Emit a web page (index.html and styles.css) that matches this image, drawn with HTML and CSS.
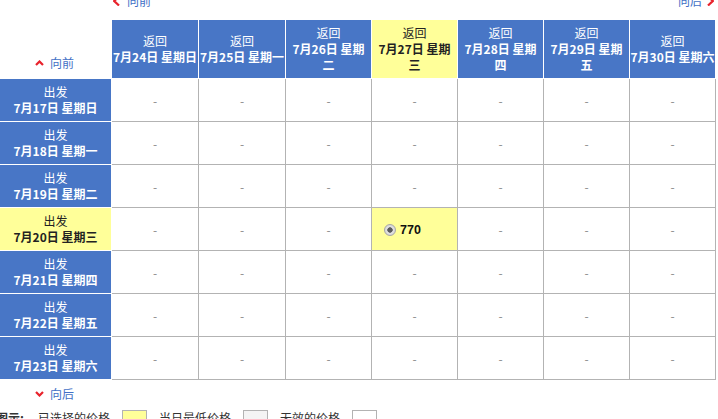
FILE: index.html
```html
<!DOCTYPE html>
<html lang="zh-CN">
<head>
<meta charset="utf-8">
<title>往返日期价格表</title>
<link rel="stylesheet" href="styles.css">
</head>
<body>
<div class="page">
  <div class="topnav">
    <a class="nav prev" href="#"><svg class="chev-lr" width="7" height="10" viewBox="0 0 7 10"><polyline points="6,0.5 1.2,5 6,9.5"/></svg>向前</a>
    <a class="nav next" href="#">向后<svg class="chev-lr" width="7" height="10" viewBox="0 0 7 10"><polyline points="1,0.5 5.8,5 1,9.5"/></svg></a>
  </div>

  <div class="grid">
    <div class="corner"><a class="nav up" href="#"><svg class="caret" width="9" height="6" viewBox="0 0 9 6"><polyline points="1,5 4.5,1.5 8,5"/></svg>向前</a></div>
    <div class="hd"><span>返回</span><b>7月24日 星期日</b></div>
    <div class="hd"><span>返回</span><b>7月25日 星期一</b></div>
    <div class="hd"><span>返回</span><b>7月26日 星期<br>二</b></div>
    <div class="hd hl"><span>返回</span><b>7月27日 星期<br>三</b></div>
    <div class="hd"><span>返回</span><b>7月28日 星期<br>四</b></div>
    <div class="hd"><span>返回</span><b>7月29日 星期<br>五</b></div>
    <div class="hd"><span>返回</span><b>7月30日 星期六</b></div>

    <div class="rh"><span>出发</span><b>7月17日 星期日</b></div>
    <div class="cell">-</div><div class="cell">-</div><div class="cell">-</div><div class="cell">-</div><div class="cell">-</div><div class="cell">-</div><div class="cell">-</div>

    <div class="rh"><span>出发</span><b>7月18日 星期一</b></div>
    <div class="cell">-</div><div class="cell">-</div><div class="cell">-</div><div class="cell">-</div><div class="cell">-</div><div class="cell">-</div><div class="cell">-</div>

    <div class="rh"><span>出发</span><b>7月19日 星期二</b></div>
    <div class="cell">-</div><div class="cell">-</div><div class="cell">-</div><div class="cell">-</div><div class="cell">-</div><div class="cell">-</div><div class="cell">-</div>

    <div class="rh hl"><span>出发</span><b>7月20日 星期三</b></div>
    <div class="cell">-</div><div class="cell">-</div><div class="cell">-</div>
    <div class="cell price selected"><span class="radio"></span><b>770</b></div>
    <div class="cell">-</div><div class="cell">-</div><div class="cell">-</div>

    <div class="rh"><span>出发</span><b>7月21日 星期四</b></div>
    <div class="cell">-</div><div class="cell">-</div><div class="cell">-</div><div class="cell">-</div><div class="cell">-</div><div class="cell">-</div><div class="cell">-</div>

    <div class="rh"><span>出发</span><b>7月22日 星期五</b></div>
    <div class="cell">-</div><div class="cell">-</div><div class="cell">-</div><div class="cell">-</div><div class="cell">-</div><div class="cell">-</div><div class="cell">-</div>

    <div class="rh"><span>出发</span><b>7月23日 星期六</b></div>
    <div class="cell">-</div><div class="cell">-</div><div class="cell">-</div><div class="cell">-</div><div class="cell">-</div><div class="cell">-</div><div class="cell">-</div>
  </div>

  <div class="bottomnav"><a class="nav down" href="#"><svg class="caret" width="9" height="6" viewBox="0 0 9 6"><polyline points="1,1 4.5,4.5 8,1"/></svg>向后</a></div>

  <div class="legend">
    <b class="lg-title">图示:</b>
    <span class="lg-label">已选择的价格</span>
    <span class="lg-box lg-yellow"></span>
    <span class="lg-label">当日最低价格</span>
    <span class="lg-box lg-gray"></span>
    <span class="lg-label">无效的价格</span>
    <span class="lg-box lg-white"></span>
  </div>
</div>
</body>
</html>
```

FILE: styles.css
```css
html, body {
  margin: 0;
  padding: 0;
  background: #fff;
}

body {
  font-family: "Noto Sans CJK SC", "Noto Sans", sans-serif;
  font-size: 12px;
  color: #333;
  overflow: hidden;
}

.page {
  width: 718px;
}

/* navigation links */
.nav {
  display: flex;
  align-items: center;
  color: #4270c6;
  text-decoration: none;
  line-height: 16px;
  white-space: nowrap;
}

.nav svg polyline {
  fill: none;
  stroke: #e8232c;
  stroke-width: 2.2;
}

.chev-lr polyline {
  stroke-width: 1.8;
}

.topnav {
  height: 20px;
  display: flex;
  justify-content: space-between;
  align-items: flex-start;
  padding: 0 4px 0 113px;
  box-sizing: border-box;
}

.topnav .nav {
  margin-top: -7px;
  line-height: 16px;
}

.prev svg {
  margin-right: 7px;
}

.next svg {
  margin-left: 5px;
}

.caret {
  margin-right: 6px;
}

/* grid */
.grid {
  display: grid;
  grid-template-columns: 112px 87px 87px repeat(5, 86px);
  grid-template-rows: 59px;
  grid-auto-rows: 43px;
}

.corner,
.hd,
.rh,
.cell {
  box-sizing: border-box;
}

.corner {
  border-bottom: 1px solid #fff;
  display: flex;
  align-items: flex-end;
  padding: 0 0 7px 35px;
}

.hd,
.rh {
  background: #4876c6;
  color: #fff;
  border-right: 1px solid #fff;
  border-bottom: 1px solid #fff;
  display: flex;
  flex-direction: column;
  align-items: center;
  justify-content: center;
  text-align: center;
  line-height: 16px;
  white-space: nowrap;
}

.hd b,
.rh b {
  font-weight: 700;
}

.hd.hl,
.rh.hl {
  background: #ffff99;
  color: #222;
}

.cell {
  border-right: 1px solid #b3b3b3;
  border-bottom: 1px solid #b3b3b3;
  display: flex;
  align-items: center;
  justify-content: center;
  color: #8a8a8a;
  font-size: 12px;
}

.cell.selected {
  background: #ffff99;
}

.cell.price {
  justify-content: flex-start;
  padding: 2px 0 0 12px;
  color: #111;
}

.cell.price b {
  font-family: "Liberation Sans", "Noto Sans CJK SC", sans-serif;
  font-weight: 700;
  font-size: 12.5px;
}

.radio {
  width: 12px;
  height: 12px;
  box-sizing: border-box;
  border-radius: 50%;
  border: 1px solid #a8a8a8;
  background: radial-gradient(circle, #5a5a5a 0 2.4px, #e4e4e4 3px, #d6d6d6 5px);
  margin-right: 4px;
}

/* bottom nav */
.bottomnav {
  height: 24px;
  padding: 4px 0 0 35px;
  box-sizing: border-box;
  display: flex;
  align-items: center;
}

/* legend */
.legend {
  display: flex;
  align-items: flex-start;
  padding-top: 6px;
  margin-left: -4px;
  gap: 12px;
  line-height: 16px;
  color: #333;
  white-space: nowrap;
}

.lg-title {
  font-weight: 700;
  margin-right: 2px;
}

.lg-box {
  width: 25px;
  height: 18px;
  box-sizing: border-box;
  border: 1px solid #b3b3b3;
}

.lg-yellow {
  background: #ffff99;
}

.lg-gray {
  background: #f4f4f4;
}

.lg-white {
  background: #fff;
}
```
